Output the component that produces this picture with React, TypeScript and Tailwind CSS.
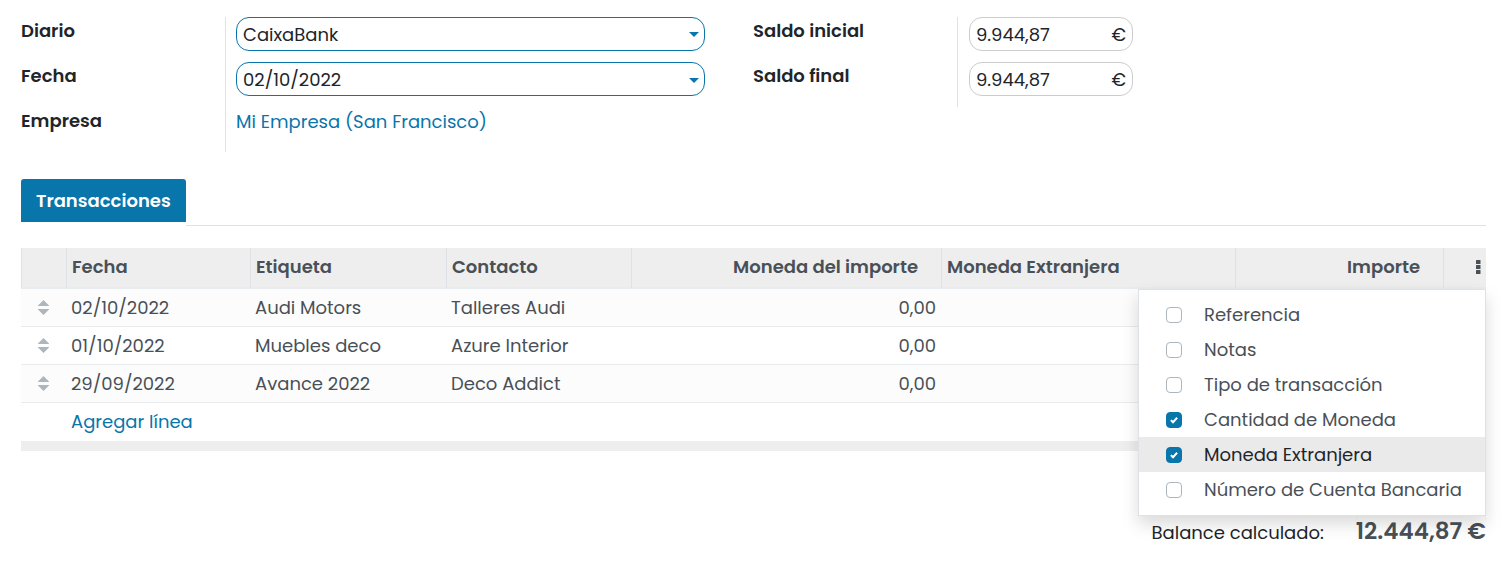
import { useState } from "react";
import type { ReactNode } from "react";

type Transaction = { date: string; label: string; partner: string; amount: string };

const transactions: Transaction[] = [
  { date: "02/10/2022", label: "Audi Motors", partner: "Talleres Audi", amount: "0,00" },
  { date: "01/10/2022", label: "Muebles deco", partner: "Azure Interior", amount: "0,00" },
  { date: "29/09/2022", label: "Avance 2022", partner: "Deco Addict", amount: "0,00" },
];

const optionalColumns = [
  { name: "Referencia", on: false },
  { name: "Notas", on: false },
  { name: "Tipo de transacción", on: false },
  { name: "Cantidad de Moneda", on: true },
  { name: "Moneda Extranjera", on: true, active: true },
  { name: "Número de Cuenta Bancaria", on: false },
];

function Caret() {
  return (
    <svg viewBox="0 0 10 5" className="h-[5px] w-[10px] fill-[#0875ab]" aria-hidden="true">
      <path d="M0 0h10L5 5z" />
    </svg>
  );
}

function SortHandle() {
  return (
    <svg viewBox="0 0 11 15" className="ml-auto h-[15px] w-[11px] fill-[#adb5bd]" aria-hidden="true">
      <path d="M0 6v-.6L5.500 0 11 5.400V6zM0 9v.6L5.500 15 11 9.600V9z" />
    </svg>
  );
}

function FieldRow({ id, label, children }: { id?: string; label: string; children: ReactNode }) {
  return (
    <div className="flex h-[45px]">
      <div className="w-[205px] shrink-0 border-r border-[#dee2e6] font-semibold leading-7">
        {id ? <label htmlFor={id}>{label}</label> : <span>{label}</span>}
      </div>
      <div className="min-w-0 flex-1 pl-[10px]">{children}</div>
    </div>
  );
}

function MoneyField({ id, value }: { id: string; value: string }) {
  return (
    <div className="ml-px flex h-[34px] w-[164px] items-center rounded-[13px] border border-[#ccc] px-1.5 pt-0.5">
      <input id={id} defaultValue={value} className="min-w-0 flex-1 bg-transparent outline-none" />
      <span>€</span>
    </div>
  );
}

function ColumnMenu() {
  const [columns, setColumns] = useState(optionalColumns);
  const toggle = (name: string) =>
    setColumns(columns.map((c) => (c.name === name ? { ...c, on: !c.on } : c)));
  return (
    <div className="absolute top-full right-0 z-10 mt-0.5 w-[348px] border border-[#dee2e6] bg-white pt-[7px] pb-2 text-left font-normal shadow-[0_8px_16px_rgba(0,0,0,0.15)]">
      {columns.map((c) => (
        <label
          key={c.name}
          className={
            c.active
              ? "flex h-[35px] items-center gap-[22px] bg-[#eaeaea] pl-[27px] whitespace-nowrap text-[#212529]"
              : "flex h-[35px] items-center gap-[22px] pl-[27px] whitespace-nowrap text-[#495057]"
          }
        >
          <span className="grid size-4 shrink-0 place-items-center">
            <input
              type="checkbox"
              checked={c.on}
              onChange={() => toggle(c.name)}
              className="col-start-1 row-start-1 size-4 appearance-none rounded-[4px] border border-[#adb5bd] bg-white checked:border-[#0875ab] checked:bg-[#0875ab]"
            />
            {c.on && (
              <svg viewBox="0 0 8 8" className="pointer-events-none col-start-1 row-start-1 size-2" aria-hidden="true">
                <path d="M.9 4.100 3 6.200 7.100 1.800" fill="none" stroke="#fff" strokeWidth="2" />
              </svg>
            )}
          </span>
          {c.name}
        </label>
      ))}
    </div>
  );
}

export default function App() {
  const [open, setOpen] = useState(true);
  const th = "px-[5px] font-semibold";
  return (
    <main className="bg-white pt-[17px] pr-[18px] pb-8 pl-[21px] font-[Poppins,Inter,'Noto_Sans',sans-serif] text-[18px] leading-7 text-[#212529]">
      <section className="grid grid-cols-2 pr-px">
        <div className="pr-12">
          <FieldRow id="journal" label="Diario">
            <div className="grid items-center">
              <select
                id="journal"
                className="col-start-1 row-start-1 h-[34px] w-full appearance-none rounded-[13px] border border-[#0875ab] bg-white px-1.5 pt-0.5 outline-none"
              >
                <option>CaixaBank</option>
              </select>
              <span className="pointer-events-none col-start-1 row-start-1 mr-1.5 justify-self-end">
                <Caret />
              </span>
            </div>
          </FieldRow>
          <FieldRow id="date" label="Fecha">
            <div className="flex h-[34px] items-center rounded-[13px] border border-[#0875ab] pt-0.5 pr-[5px] pl-1.5">
              <input id="date" defaultValue="02/10/2022" className="min-w-0 flex-1 bg-transparent outline-none" />
              <button type="button" aria-label="Abrir calendario">
                <Caret />
              </button>
            </div>
          </FieldRow>
          <FieldRow label="Empresa">
            <a href="#empresa" className="block pt-px text-[#0875ab]">
              Mi Empresa (San Francisco)
            </a>
          </FieldRow>
        </div>
        <div>
          <FieldRow id="start" label="Saldo inicial">
            <MoneyField id="start" value="9.944,87" />
          </FieldRow>
          <FieldRow id="end" label="Saldo final">
            <MoneyField id="end" value="9.944,87" />
          </FieldRow>
        </div>
      </section>

      <div className="mt-[27px] flex h-[47px]" role="tablist">
        <button
          type="button"
          role="tab"
          aria-selected="true"
          className="h-[43px] rounded-t-[3px] bg-[#0875ab] px-[15px] font-semibold text-white"
        >
          Transacciones
        </button>
        <div className="flex-1 border-b border-[#dee2e6]" />
      </div>

      <table className="mt-[22px] w-full table-fixed border-separate border-spacing-0 text-[#495057]">
        <colgroup>
          <col className="w-[45px]" />
          <col className="w-[184px]" />
          <col className="w-[196px]" />
          <col className="w-[185px]" />
          <col className="w-[310px]" />
          <col />
          <col className="w-[208px]" />
          <col className="w-[43px]" />
        </colgroup>
        <thead className="bg-[#eee] text-left">
          <tr className="h-[41px] [&>th]:border-b-2 [&>th]:border-l [&>th]:border-b-[#e9ecef] [&>th]:border-l-[#dee2e6] [&>th]:pb-0.5">
            <th className={th} aria-label="Orden" />
            <th className={th}>Fecha</th>
            <th className={th}>Etiqueta</th>
            <th className={th}>Contacto</th>
            <th className="pr-[23px] text-right font-semibold">Moneda del importe</th>
            <th className={th}>Moneda Extranjera</th>
            <th className="pr-[23px] text-right font-semibold">Importe</th>
            <th className="relative pr-[5px]">
              <button
                type="button"
                aria-label="Columnas opcionales"
                aria-expanded={open}
                onClick={() => setOpen(!open)}
                className="ml-auto block"
              >
                <svg viewBox="0 0 5 14" className="h-[14px] w-[5px] fill-[#495057]" aria-hidden="true">
                  <rect width="4.500" height="4" rx=".5" />
                  <rect y="5" width="4.500" height="4" rx=".5" />
                  <rect y="10" width="4.500" height="4" rx=".5" />
                </svg>
              </button>
              {open && <ColumnMenu />}
            </th>
          </tr>
        </thead>
        <tbody>
          {transactions.map((t) => (
            <tr key={t.date} className="h-[38px] odd:bg-[#fcfcfc] [&>td]:border-b [&>td]:border-[#e9ecef]">
              <td className="pr-[17px]">
                <SortHandle />
              </td>
              <td className="px-[5px]">{t.date}</td>
              <td className="px-[5px]">{t.label}</td>
              <td className="px-[5px]">{t.partner}</td>
              <td className="px-[5px] text-right">{t.amount}</td>
              <td />
              <td />
              <td />
            </tr>
          ))}
          <tr className="h-[38px]">
            <td />
            <td colSpan={7} className="px-[5px]">
              <button type="button" className="text-[#0875ab]">
                Agregar línea
              </button>
            </td>
          </tr>
        </tbody>
        <tfoot>
          <tr className="h-[10px] bg-[#eee]">
            <td colSpan={8} />
          </tr>
        </tfoot>
      </table>

      <div className="mt-[59px] flex items-baseline justify-end gap-8">
        <span>Balance calculado:</span>
        <output className="rounded-t-xl border-t border-[#dee2e6] pt-1.5 text-[23px] font-semibold text-[#495057]">12.444,87 €</output>
      </div>
    </main>
  );
}
